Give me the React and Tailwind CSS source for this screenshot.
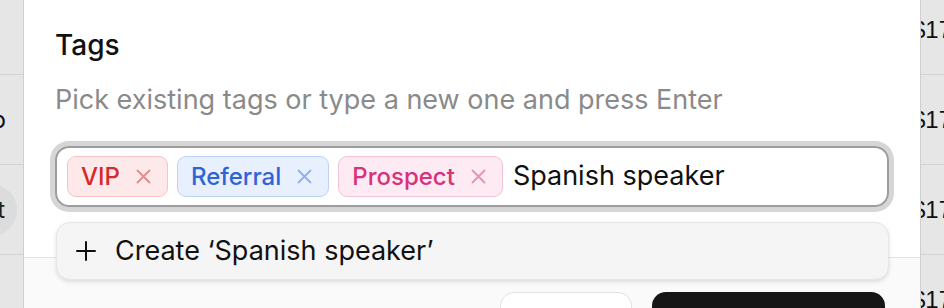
import React from "react";

const rows = [
    { left: "", right: "$17" },
    { left: "Jacob", right: "$17" },
    { left: "Lost", right: "$17", pill: true },
    { left: "", right: "$17" },
];

function Chip({ label, tone }) {
    const tones = {
        red: "bg-[#fde9e9] border-[#f6c4c4] text-[#d62a2a]",
        blue: "bg-[#e8f0fe] border-[#bcd2f8] text-[#2f64d6]",
        pink: "bg-[#fdeaf2] border-[#f5c2d8] text-[#d7327a]",
    };
    const x = {
        red: "text-[#e58a8a]",
        blue: "text-[#8fb0ec]",
        pink: "text-[#ea8fb7]",
    };
    return (
        <span className={`flex items-center gap-[16px] h-[41px] pl-[13px] pr-[16px] rounded-[9px] border-[1.5px] text-[24px] font-medium ${tones[tone]}`}>
            {label}
            <svg width="15" height="15" viewBox="0 0 15 15" className={x[tone]}>
                <path d="M1.5 1.5L13.5 13.5M13.5 1.5L1.5 13.5" stroke="currentColor" strokeWidth="1.8" strokeLinecap="round" />
            </svg>
        </span>
    );
}

export default function App() {
    return (
        <div className="relative w-[944px] h-[308px] overflow-hidden bg-[#e6e6e6]" style={{ fontFamily: "Inter, 'Noto Sans', sans-serif" }}>
            {/* background table, dimmed */}
            <div className="flex flex-col -mt-[15px]">
                {rows.map((r, i) => (
                    <div key={i} className="h-[90px] flex items-center justify-between border-b-[1.5px] border-[#d2d2d2]">
                        <div className="w-[23px] overflow-hidden flex justify-end">
                            {r.pill ? (
                                <span className="shrink-0 mr-[6px] bg-[#dcdcdc] rounded-full pl-3 pr-[12px] py-[8px] text-[24px] text-[#222]">{r.left}</span>
                            ) : (
                                <span className="shrink-0 mr-[17px] text-[24px] text-[#111]">{r.left}</span>
                            )}
                        </div>
                        <span className="shrink-0 w-[32px] whitespace-nowrap text-[24px] text-[#111]" style={{ fontFamily: "'Liberation Sans', sans-serif" }}>{r.right}</span>
                    </div>
                ))}
            </div>

            {/* modal */}
            <div className="absolute left-[23px] top-0 w-[898px] h-full bg-white border-x-[1.5px] border-[#cfcfcf] flex flex-col">
                <div className="px-[31px] pt-[27px]">
                    <div className="text-[28px] font-medium text-[#111] leading-[36px]">Tags</div>
                    <div className="mt-[22px] text-[27px] text-[#8a8a8a] leading-[30px] whitespace-nowrap">Pick existing tags or type a new one and press Enter</div>
                    <div className="mt-[31px] h-[61px] rounded-[14px] border-2 border-[#9d9d9d] ring-[5px] ring-[#d6d6d6] flex items-center gap-[9px] px-[10px]">
                        <Chip label="VIP" tone="red" />
                        <Chip label="Referral" tone="blue" />
                        <Chip label="Prospect" tone="pink" />
                        <span className="text-[27px] text-[#111] ml-[1px] whitespace-nowrap">Spanish speaker</span>
                    </div>
                </div>
                <div className="flex-1 mt-[50px] bg-[#fafafa] border-t-[1.5px] border-[#e4e4e4] flex justify-end gap-[20px] pr-[35px] pt-[34px]">
                    <div className="w-[132px] h-[50px] bg-white border-[1.5px] border-[#e2e2e2] rounded-[14px]" />
                    <div className="w-[233px] h-[50px] bg-[#161616] rounded-[14px]" />
                </div>
                {/* dropdown */}
                <div className="absolute left-[32px] top-[222px] w-[833px] h-[58px] bg-[#f5f5f5] border-[1.5px] border-[#e6e6e6] rounded-[14px] shadow-[0_2px_4px_rgba(0,0,0,0.12)] flex items-center pl-[19px] gap-[19px]">
                    <svg width="20" height="20" viewBox="0 0 20 20" className="text-[#111]">
                        <path d="M10 1V19M1 10H19" stroke="currentColor" strokeWidth="2" strokeLinecap="round" />
                    </svg>
                    <span className="text-[27px] text-[#111] whitespace-nowrap">Create ‘Spanish speaker’</span>
                </div>
            </div>
        </div>
    );
}
